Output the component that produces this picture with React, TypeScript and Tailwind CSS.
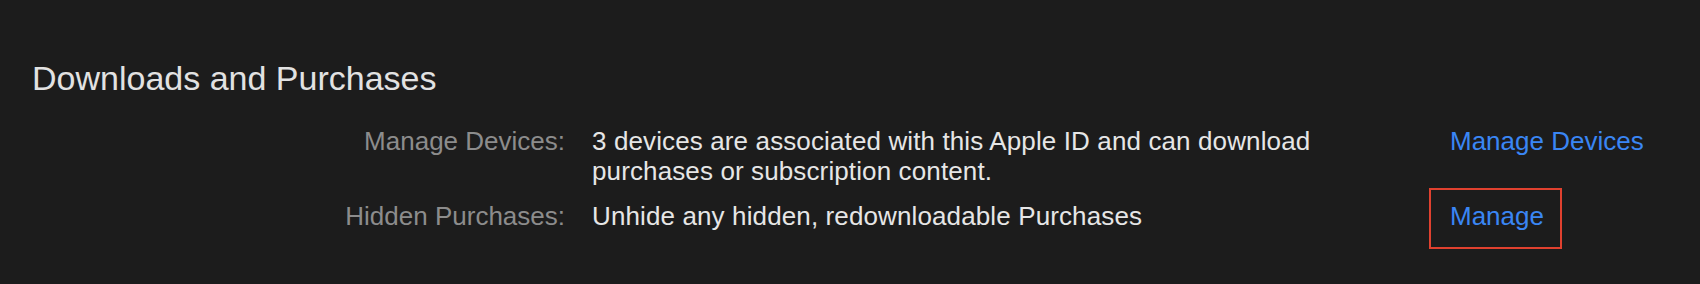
export default function App() {
  const rows = [
    {
      label: "Manage Devices:",
      text: "3 devices are associated with this Apple ID and can download purchases or subscription content.",
      action: "Manage Devices",
      highlight: false,
    },
    {
      label: "Hidden Purchases:",
      text: "Unhide any hidden, redownloadable Purchases",
      action: "Manage",
      highlight: true,
    },
  ];

  return (
    <div
      className="h-[284px] w-full bg-[#1c1c1c] pl-[32px] pt-[58px]"
      style={{ fontFamily: '"Liberation Sans", Arial, sans-serif' }}
    >
      <h2 className="text-[34px] leading-[40px] text-[#e2e2e2]">
        Downloads and Purchases
      </h2>

      <div className="mt-[28px] flex flex-col gap-[15px] text-[26px] leading-[30px]">
        {rows.map((row) => (
          <div key={row.label} className="flex">
            <div className="w-[533px] shrink-0 text-right text-[#8c8c8c]">
              {row.label}
            </div>
            <div className="ml-[27px] w-[760px] shrink-0 tracking-[0.12px] text-[#e6e6e6]">
              {row.text}
            </div>
            <div className="ml-[98px]">
              <span className="relative text-[#3a86f4]">
                {row.action}
                {row.highlight && (
                  <span className="pointer-events-none absolute -top-[13px] -bottom-[18px] -left-[21px] -right-[18px] border-2 border-[#e0412f]" />
                )}
              </span>
            </div>
          </div>
        ))}
      </div>
    </div>
  );
}
